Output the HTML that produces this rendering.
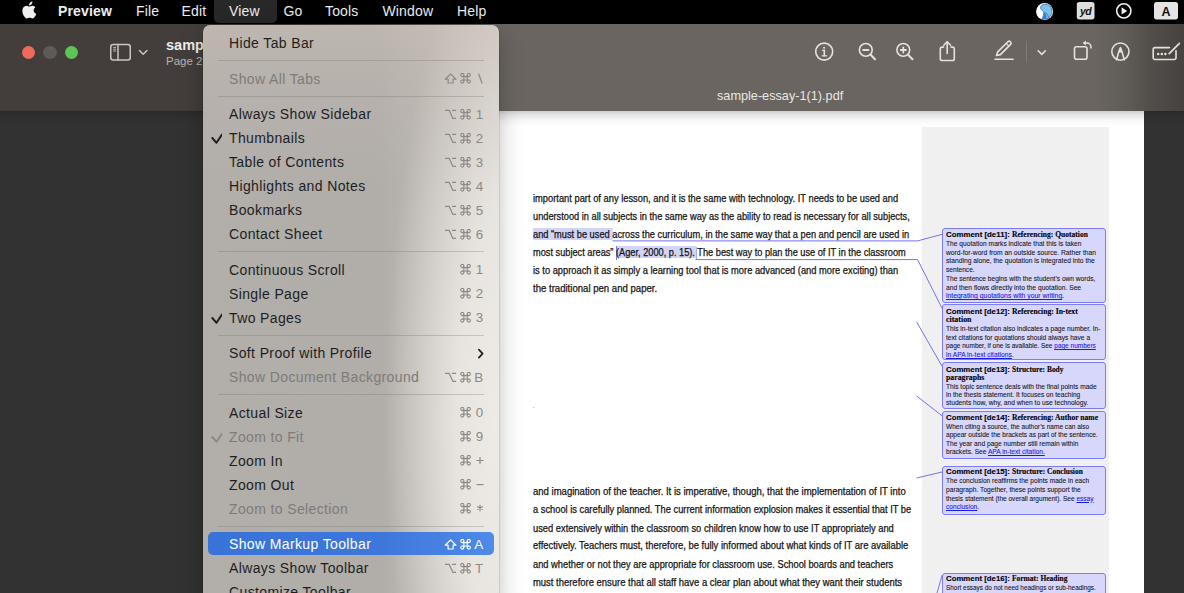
<!DOCTYPE html>
<html><head><meta charset="utf-8">
<style>
*{margin:0;padding:0;box-sizing:border-box}
html,body{width:1184px;height:593px;overflow:hidden;background:#323232;font-family:"Liberation Sans",sans-serif}
.abs{position:absolute}
#menubar{position:absolute;left:0;top:0;width:1184px;height:24px;background:#000}
#menubar .mi{position:absolute;top:-1.2px;height:24px;line-height:24px;color:#ececec;font-size:14px;letter-spacing:0.15px;white-space:nowrap}
#toolbar{z-index:2;position:absolute;left:0;top:24px;width:1184px;height:86.6px;background:linear-gradient(90deg,#433e3b 0px,#433e3b 300px,#6a6560 495px,#6a6560 1095px,#605c57 1125px,#524e4a 1150px,#46423f 1184px)}
#docarea{position:absolute;left:0;top:110px;width:1184px;height:483px;background:#323232}
#page{position:absolute;left:470px;top:110px;width:674px;height:483px;background:#fff}
#topshadow{position:absolute;left:0;top:110px;width:1184px;height:16px;background:linear-gradient(180deg,rgba(0,0,0,0.22),rgba(0,0,0,0.1) 30%,rgba(0,0,0,0.03) 65%,rgba(0,0,0,0))}
#menu{z-index:10;position:absolute;left:203px;top:24.5px;width:296px;height:580px;border-radius:7px;overflow:hidden;box-shadow:0 0 0 0.5px rgba(0,0,0,0.2),0 8px 24px rgba(0,0,0,0.25);
 background:linear-gradient(180deg,rgba(205,194,184,0.45) 0px,rgba(205,194,184,0.2) 60px,rgba(205,194,184,0) 160px),radial-gradient(ellipse 130px 500px at 312px 400px,rgba(241,238,234,0.97) 0%,rgba(238,235,231,0.85) 45%,rgba(232,228,224,0) 100%),linear-gradient(90deg,#b2aeaa 0px,#b1ada9 175px,#bcb7b2 230px,#c8c2bc 296px)}
.it{position:relative;height:24px;font-size:14px;letter-spacing:0.37px;color:#1e1e1e;white-space:nowrap}
.it .t{position:absolute;left:26px;top:0;line-height:24px}
.it .k{position:absolute;right:16px;top:0;line-height:24px;color:#8a8683}
.it.dis .t{color:#7f7b78}
.it .ck{position:absolute;left:5px;top:0}
.it .sc{position:absolute;left:241px;top:6.5px}
.sep{height:11.5px;position:relative}
.sep::after{content:"";position:absolute;left:15px;right:15px;top:5px;height:1px;background:rgba(120,115,110,0.32)}
.it.hl{}
.it.hl::before{content:"";position:absolute;left:5px;right:5px;top:-0.5px;height:23.5px;border-radius:5px;background:linear-gradient(90deg,#3a73d7 0%,#3d77dc 60%,#4f8be8 100%)}
.it.hl .t,.it.hl .k{color:#fff}
.doc{position:absolute;left:533px;font-size:10px;color:#111;white-space:nowrap;line-height:12px}
.doc span.s{display:inline-block;transform-origin:0 50%}

.ln{position:absolute;line-height:0;white-space:nowrap}
.ln .s{display:inline-block;line-height:0;transform-origin:0 0;-webkit-text-stroke:0.25px currentColor}
.ct .s{-webkit-text-stroke:0.12px currentColor}
.cb .s{-webkit-text-stroke:0.08px currentColor}
.doc{}
u{color:#1a1ae6;text-decoration:underline;text-decoration-thickness:0.35px;text-underline-offset:0.8px}
.cbox{position:absolute;left:942.2px;width:163.5px;background:#d7d7fc;border:1px solid #7b7bf2;border-radius:3px}
</style></head><body>
<div id="menubar">
  <div class="mi" style="left:214px;width:62.5px;height:27px;top:-4px;background:#282828;border-radius:5px"></div>
  <svg class="abs" style="left:21px;top:0.8px" width="16" height="18" viewBox="0 0 16 18"><path fill="#efefef" d="M12.6 9.5c0-2 1.7-3 1.8-3.1-1-1.4-2.5-1.6-3-1.7-1.3-.1-2.5.8-3.1.8-.7 0-1.7-.8-2.7-.8C4.100 4.800 2.800 5.600 2.100 6.900.6 9.400 1.700 13.200 3.200 15.300c.7 1 1.600 2.200 2.700 2.100 1.100 0 1.500-.7 2.800-.7s1.700.7 2.800.7c1.200 0 1.900-1 2.600-2.100.8-1.200 1.200-2.300 1.200-2.400-.1 0-2.700-1-2.700-3.400zM10.500 3.300c.6-.7 1-1.700.9-2.700-.9 0-1.900.6-2.500 1.300-.6.600-1.100 1.600-.9 2.600 1 .1 1.900-.5 2.500-1.200z"/></svg>
  <div class="mi" style="left:58px;font-weight:bold">Preview</div>
  <div class="mi" style="left:136px">File</div>
  <div class="mi" style="left:181.5px">Edit</div>
  <div class="mi" style="left:229px">View</div>
  <div class="mi" style="left:283.5px">Go</div>
  <div class="mi" style="left:325px">Tools</div>
  <div class="mi" style="left:382.5px">Window</div>
  <div class="mi" style="left:457px">Help</div>
  <svg class="abs" style="left:1030px;top:0" width="154" height="24" viewBox="1030 0 154 24">
    <circle cx="1044.6" cy="11.4" r="8.5" fill="#fbfbfb"/>
    <path d="M1041.2 5.8C1043 3.6 1048.5 3.8 1050.8 7C1053 10.5 1052.2 16.5 1047.2 18.7C1045.6 19.3 1043.6 19.4 1042.1 19C1043.3 16.6 1044 14 1043.6 12.4C1043.3 11 1041.2 10.2 1040.7 8.6C1040.4 7.5 1040.6 6.6 1041.2 5.8Z" fill="#7cc3ec" stroke="#2d5f9e" stroke-width="0.7"/>
    <path d="M1042.1 19C1043.5 16 1044.2 13.5 1044.3 12.3C1046 13.5 1046.8 16 1046.6 19Z" fill="#3a7ccd"/>
    <path d="M1044.6 12.2C1047 13 1048.4 15.5 1048.6 18.4" fill="none" stroke="#2d5f9e" stroke-width="0.7"/>
    <rect x="1076.8" y="2" width="17.7" height="17.4" rx="2.6" fill="#dedede"/>
    <text x="1085.6" y="15" text-anchor="middle" font-family="Liberation Sans" font-weight="bold" font-style="italic" font-size="10.5" fill="#111" letter-spacing="-0.6">yd</text>
    <circle cx="1123.8" cy="10.9" r="7.1" fill="none" stroke="#f2f2f2" stroke-width="1.6"/>
    <path d="M1121.6 7.3v7.2l5.6-3.6z" fill="#f2f2f2"/>
    <rect x="1154" y="2" width="24" height="17.4" rx="2.6" fill="#e4e4e4"/>
    <text x="1166" y="15.6" text-anchor="middle" font-family="Liberation Sans" font-weight="bold" font-size="12.5" fill="#111">A</text>
  </svg>
</div>

<div id="toolbar"></div>
<div id="tbitems" style="position:absolute;left:0;top:0;z-index:3">
  <div class="abs" style="left:21.5px;top:45.5px;width:13.6px;height:13.6px;border-radius:50%;background:#ec6a5e"></div>
  <div class="abs" style="left:43.1px;top:45.5px;width:13.6px;height:13.6px;border-radius:50%;background:#5e5a57"></div>
  <div class="abs" style="left:64.8px;top:45.5px;width:13.6px;height:13.6px;border-radius:50%;background:#5fc454"></div>
  <svg class="abs" style="left:108px;top:42px" width="44" height="21" viewBox="0 0 44 21">
    <g fill="none" stroke="#cbc6c1" stroke-width="1.5" stroke-linecap="round" stroke-linejoin="round">
      <rect x="2.75" y="2.5" width="19.5" height="15.5" rx="2.5"/>
      <line x1="10" y1="2.5" x2="10" y2="18"/>
      <line x1="5.6" y1="5.4" x2="7.7" y2="5.4" stroke-width="0.9"/>
      <line x1="5.6" y1="7.2" x2="7.7" y2="7.2" stroke-width="0.9"/>
      <line x1="5.6" y1="9" x2="7.7" y2="9" stroke-width="0.9"/>
      <polyline points="31.5,8.5 35.2,12.2 38.9,8.5"/>
    </g>
  </svg>
  <div class="abs" style="left:166px;top:36.5px;font-size:14.5px;font-weight:bold;color:#f0ece8;white-space:nowrap">sample-essay-1(1).pdf</div>
  <div class="abs" style="left:166px;top:54.8px;font-size:11.5px;color:#b9b4af;white-space:nowrap">Page 2 of 3</div>
  <svg class="abs" style="left:800px;top:36px" width="384" height="30" viewBox="800 36 384 30">
    <g fill="none" stroke="#e6e1dc" stroke-width="1.6" stroke-linecap="round" stroke-linejoin="round">
      <circle cx="824.2" cy="51.6" r="8.5"/>
      <line x1="824.3" y1="50.3" x2="824.3" y2="55.6" stroke-width="1.6"/>
      <line x1="822.5" y1="50.3" x2="824.3" y2="50.3" stroke-width="1.2"/>
      <line x1="822.2" y1="55.8" x2="826.6" y2="55.8" stroke-width="1.3"/>
      <circle cx="865.8" cy="49.9" r="6.4"/>
      <line x1="870.6" y1="54.7" x2="875" y2="59.2" stroke-width="2"/>
      <line x1="863.2" y1="50" x2="868.4" y2="50" stroke-width="1.9"/>
      <circle cx="903.3" cy="49.9" r="6.4"/>
      <line x1="908.1" y1="54.7" x2="912.5" y2="59.2" stroke-width="2"/>
      <line x1="900.7" y1="50" x2="905.9" y2="50" stroke-width="1.8"/>
      <line x1="903.3" y1="47.4" x2="903.3" y2="52.6" stroke-width="1.8"/>
      <path d="M943.6 47.1h-1.5a1.8 1.8 0 0 0 -1.8 1.8v9.8a1.8 1.8 0 0 0 1.8 1.8h10.4a1.8 1.8 0 0 0 1.8 -1.8v-9.8a1.8 1.8 0 0 0 -1.8 -1.8h-1.5"/>
      <line x1="947.2" y1="42" x2="947.2" y2="53.5"/>
      <polyline points="943.8,45.2 947.2,41.8 950.6,45.2"/>
      <path d="M996.5 55.5l1.2-3.6 10.2-10.2a1.7 1.7 0 0 1 2.4 0l0.3 0.3a1.7 1.7 0 0 1 0 2.4l-10.2 10.2z"/>
      <line x1="1006.2" y1="43.4" x2="1008.9" y2="46.1" stroke-width="1.2"/>
      <line x1="995" y1="59.2" x2="1013" y2="59.2" stroke-width="1.6"/>
      <polyline points="1038.2,50.8 1041.8,54.4 1045.4,50.8"/>
      <rect x="1074.5" y="46.8" width="12.5" height="12.5" rx="2"/>
      <path d="M1085.2 43h1.6a4.2 4.2 0 0 1 4.2 4.2v0.8"/>
      <circle cx="1120.4" cy="51.6" r="8.6"/>
      <path d="M1116.6 59.8l2-7.4 1.8-4.6 1.8 4.6 2 7.4"/>
      <path d="M1155 47.6a1.8 1.8 0 0 0 -1.8 1.8v8.3a1.8 1.8 0 0 0 1.8 1.8h19.2a1.8 1.8 0 0 0 1.8 -1.8v-7 M1155 47.6h14.5"/>
      <line x1="1169.2" y1="53.6" x2="1178.4" y2="44.4" stroke-width="1.7"/>
    </g>
    <path d="M1082.6 43l3.2-2.4v4.8z" fill="#e6e1dc"/>
    <path d="M1120.4 46.4l-2.4 6h4.8z" fill="#e6e1dc"/>
    <circle cx="824.1" cy="47.8" r="1.05" fill="#e6e1dc"/>
    <line x1="1026.5" y1="41" x2="1026.5" y2="62.5" stroke="#807a75" stroke-width="1"/>
    <g fill="#e6e1dc"><circle cx="1158.2" cy="53.9" r="1.25"/><circle cx="1161.8" cy="53.9" r="1.25"/><circle cx="1165.4" cy="53.9" r="1.25"/><circle cx="1179.3" cy="43.5" r="0.9"/></g>
  </svg>
  <div class="abs" style="left:717px;top:88.6px;font-size:12.7px;color:#ebe7e3;white-space:nowrap">sample-essay-1(1).pdf</div>
</div>
<div id="docarea"></div>
<div id="page"></div>
<div class="abs" style="left:921.5px;top:126.7px;width:187.5px;height:470px;background:#f0f0f0"></div>
<div class="abs" style="left:533px;top:228px;width:79.4px;height:11.6px;background:#d3d3f6"></div>
<div class="abs" style="left:616.4px;top:246.4px;width:79.6px;height:11.9px;background:#d3d3f6"></div>
<div class="abs" style="left:612.4px;top:228px;width:1px;height:12px;background:#e3e3fb"></div>
<div class="abs" style="left:616px;top:246.3px;width:1px;height:13.5px;background:#7a7af0"></div>
<div class="abs" style="left:695.6px;top:246.5px;width:1px;height:13px;background:#a9a9f5"></div>
<svg class="abs" style="left:0;top:0" width="1184" height="593">
 <g fill="none" stroke="#7272f2" stroke-width="1">
  <polyline points="612.4,240.9 917.6,240.9 942.2,234.3"/>
  <polyline points="695.6,259.6 917.6,259.6 942.2,308.5"/>
  <line x1="916.7" y1="322" x2="942" y2="366.2"/>
  <line x1="916.7" y1="396" x2="942" y2="415.8"/>
  <line x1="916.7" y1="478" x2="942" y2="472"/>
  <line x1="937" y1="593" x2="942.2" y2="575"/>
 </g>
</svg>
<div class="cbox" style="top:228.2px;height:74.5px"></div>
<div class="cbox" style="top:304.2px;height:56.2px"></div>
<div class="cbox" style="top:362.3px;height:47.2px"></div>
<div class="cbox" style="top:410.6px;height:48.6px"></div>
<div class="cbox" style="top:465.6px;height:49px"></div>
<div class="cbox" style="top:572.9px;height:40px"></div>
<div class="ln doc" style="left:533.40px;top:198.73px;font-family:'Liberation Sans';font-size:10px;font-weight:normal;color:#141414"><span class="s" id="m0" style="transform:scaleX(0.9327)">important part of any lesson, and it is the same with technology. IT needs to be used and</span></div>
<div class="ln doc" style="left:533.40px;top:216.73px;font-family:'Liberation Sans';font-size:10px;font-weight:normal;color:#141414"><span class="s" id="m1" style="transform:scaleX(0.9233)">understood in all subjects in the same way as the ability to read is necessary for all subjects,</span></div>
<div class="ln doc" style="left:533.40px;top:234.63px;font-family:'Liberation Sans';font-size:10px;font-weight:normal;color:#141414"><span class="s" id="m2" style="transform:scaleX(0.9258)"><span class="hl1">and “must be used </span>across the curriculum, in the same way that a pen and pencil are used in</span></div>
<div class="ln doc" style="left:533.40px;top:252.53px;font-family:'Liberation Sans';font-size:10px;font-weight:normal;color:#141414"><span class="s" id="m3" style="transform:scaleX(0.9218)">most subject areas” <span class="hl2">(Ager, 2000, p. 15).</span> The best way to plan the use of IT in the classroom</span></div>
<div class="ln doc" style="left:533.40px;top:270.54px;font-family:'Liberation Sans';font-size:10px;font-weight:normal;color:#141414"><span class="s" id="m4" style="transform:scaleX(0.9306)">is to approach it as simply a learning tool that is more advanced (and more exciting) than</span></div>
<div class="ln doc" style="left:533.40px;top:288.54px;font-family:'Liberation Sans';font-size:10px;font-weight:normal;color:#141414"><span class="s" id="m5" style="transform:scaleX(0.9580)">the traditional pen and paper.</span></div>
<div class="ln doc" style="left:533.40px;top:492.13px;font-family:'Liberation Sans';font-size:10px;font-weight:normal;color:#141414"><span class="s" id="m6" style="transform:scaleX(0.9528)">and imagination of the teacher. It is imperative, though, that the implementation of IT into</span></div>
<div class="ln doc" style="left:533.40px;top:510.44px;font-family:'Liberation Sans';font-size:10px;font-weight:normal;color:#141414"><span class="s" id="m7" style="transform:scaleX(0.9303)">a school is carefully planned. The current information explosion makes it essential that IT be</span></div>
<div class="ln doc" style="left:533.40px;top:528.53px;font-family:'Liberation Sans';font-size:10px;font-weight:normal;color:#141414"><span class="s" id="m8" style="transform:scaleX(0.9317)">used extensively within the classroom so children know how to use IT appropriately and</span></div>
<div class="ln doc" style="left:533.40px;top:546.34px;font-family:'Liberation Sans';font-size:10px;font-weight:normal;color:#141414"><span class="s" id="m9" style="transform:scaleX(0.9419)">effectively. Teachers must, therefore, be fully informed about what kinds of IT are available</span></div>
<div class="ln doc" style="left:533.40px;top:564.63px;font-family:'Liberation Sans';font-size:10px;font-weight:normal;color:#141414"><span class="s" id="m10" style="transform:scaleX(0.9297)">and whether or not they are appropriate for classroom use. School boards and teachers</span></div>
<div class="ln doc" style="left:533.40px;top:582.63px;font-family:'Liberation Sans';font-size:10px;font-weight:normal;color:#141414"><span class="s" id="m11" style="transform:scaleX(0.9447)">must therefore ensure that all staff have a clear plan about what they want their students</span></div>
<div class="ln ct" style="left:946.40px;top:234.51px;font-family:'Liberation Sans';font-size:7.2px;font-weight:bold;color:#000"><span class="s" id="m12" style="transform:scaleX(1.0941)">Comment [de11]:</span></div>
<div class="ln ct" style="left:1012.00px;top:234.50px;font-family:'Liberation Serif';font-size:7.4px;font-weight:bold;color:#000"><span class="s" id="m13" style="transform:scaleX(1.0203)">Referencing: Quotation</span></div>
<div class="ln cb" style="left:946.40px;top:244.11px;font-family:'Liberation Sans';font-size:6.6px;font-weight:normal;color:#161616"><span class="s" id="m14" style="transform:scaleX(1.0100)">The quotation marks indicate that this is taken</span></div>
<div class="ln cb" style="left:946.40px;top:252.71px;font-family:'Liberation Sans';font-size:6.6px;font-weight:normal;color:#161616"><span class="s" id="m15" style="transform:scaleX(1.0156)">word-for-word from an outside source. Rather than</span></div>
<div class="ln cb" style="left:946.40px;top:261.21px;font-family:'Liberation Sans';font-size:6.6px;font-weight:normal;color:#161616"><span class="s" id="m16" style="transform:scaleX(1.0198)">standing alone, the quotation is integrated into the</span></div>
<div class="ln cb" style="left:946.40px;top:269.91px;font-family:'Liberation Sans';font-size:6.6px;font-weight:normal;color:#161616"><span class="s" id="m17" style="transform:scaleX(1.0037)">sentence.</span></div>
<div class="ln cb" style="left:946.40px;top:279.31px;font-family:'Liberation Sans';font-size:6.6px;font-weight:normal;color:#161616"><span class="s" id="m18" style="transform:scaleX(1.0016)">The sentence begins with the student’s own words,</span></div>
<div class="ln cb" style="left:946.40px;top:287.81px;font-family:'Liberation Sans';font-size:6.6px;font-weight:normal;color:#161616"><span class="s" id="m19" style="transform:scaleX(1.0153)">and then flows directly into the quotation. See</span></div>
<div class="ln cb" style="left:946.40px;top:296.41px;font-family:'Liberation Sans';font-size:6.6px;font-weight:normal;color:#161616"><span class="s" id="m20" style="transform:scaleX(1.0360)"><u>integrating quotations with your writing</u>.</span></div>
<div class="ln ct" style="left:946.40px;top:312.11px;font-family:'Liberation Sans';font-size:7.2px;font-weight:bold;color:#000"><span class="s" id="m21" style="transform:scaleX(1.0865)">Comment [de12]:</span></div>
<div class="ln ct" style="left:1012.00px;top:312.10px;font-family:'Liberation Serif';font-size:7.4px;font-weight:bold;color:#000"><span class="s" id="m22" style="transform:scaleX(1.0313)">Referencing: In-text</span></div>
<div class="ln ct" style="left:946.40px;top:320.20px;font-family:'Liberation Serif';font-size:7.4px;font-weight:bold;color:#000"><span class="s" id="m23" style="transform:scaleX(1.0709)">citation</span></div>
<div class="ln cb" style="left:946.40px;top:329.31px;font-family:'Liberation Sans';font-size:6.6px;font-weight:normal;color:#161616"><span class="s" id="m24" style="transform:scaleX(1.0037)">This in-text citation also indicates a page number. In-</span></div>
<div class="ln cb" style="left:946.40px;top:337.71px;font-family:'Liberation Sans';font-size:6.6px;font-weight:normal;color:#161616"><span class="s" id="m25" style="transform:scaleX(1.0054)">text citations for quotations should always have a</span></div>
<div class="ln cb" style="left:946.40px;top:346.21px;font-family:'Liberation Sans';font-size:6.6px;font-weight:normal;color:#161616"><span class="s" id="m26" style="transform:scaleX(0.9847)">page number, if one is available. See <u>page numbers</u></span></div>
<div class="ln cb" style="left:946.40px;top:355.11px;font-family:'Liberation Sans';font-size:6.6px;font-weight:normal;color:#161616"><span class="s" id="m27" style="transform:scaleX(1.0166)"><u>in APA in-text citations</u>.</span></div>
<div class="ln ct" style="left:946.40px;top:369.61px;font-family:'Liberation Sans';font-size:7.2px;font-weight:bold;color:#000"><span class="s" id="m28" style="transform:scaleX(1.0865)">Comment [de13]:</span></div>
<div class="ln ct" style="left:1012.00px;top:369.60px;font-family:'Liberation Serif';font-size:7.4px;font-weight:bold;color:#000"><span class="s" id="m29" style="transform:scaleX(1.0101)">Structure: Body</span></div>
<div class="ln ct" style="left:946.40px;top:378.10px;font-family:'Liberation Serif';font-size:7.4px;font-weight:bold;color:#000"><span class="s" id="m30" style="transform:scaleX(1.0503)">paragraphs</span></div>
<div class="ln cb" style="left:946.40px;top:386.51px;font-family:'Liberation Sans';font-size:6.6px;font-weight:normal;color:#161616"><span class="s" id="m31" style="transform:scaleX(1.0003)">This topic sentence deals with the final points made</span></div>
<div class="ln cb" style="left:946.40px;top:394.81px;font-family:'Liberation Sans';font-size:6.6px;font-weight:normal;color:#161616"><span class="s" id="m32" style="transform:scaleX(1.0038)">in the thesis statement. It focuses on teaching</span></div>
<div class="ln cb" style="left:946.40px;top:403.41px;font-family:'Liberation Sans';font-size:6.6px;font-weight:normal;color:#161616"><span class="s" id="m33" style="transform:scaleX(1.0120)">students how, why, and when to use technology.</span></div>
<div class="ln ct" style="left:946.40px;top:417.61px;font-family:'Liberation Sans';font-size:7.2px;font-weight:bold;color:#000"><span class="s" id="m34" style="transform:scaleX(1.0865)">Comment [de14]:</span></div>
<div class="ln ct" style="left:1012.00px;top:417.60px;font-family:'Liberation Serif';font-size:7.4px;font-weight:bold;color:#000"><span class="s" id="m35" style="transform:scaleX(1.0251)">Referencing: Author name</span></div>
<div class="ln cb" style="left:946.40px;top:426.51px;font-family:'Liberation Sans';font-size:6.6px;font-weight:normal;color:#161616"><span class="s" id="m36" style="transform:scaleX(0.9907)">When citing a source, the author’s name can also</span></div>
<div class="ln cb" style="left:946.40px;top:435.01px;font-family:'Liberation Sans';font-size:6.6px;font-weight:normal;color:#161616"><span class="s" id="m37" style="transform:scaleX(0.9972)">appear outside the brackets as part of the sentence.</span></div>
<div class="ln cb" style="left:946.40px;top:443.51px;font-family:'Liberation Sans';font-size:6.6px;font-weight:normal;color:#161616"><span class="s" id="m38" style="transform:scaleX(1.0062)">The year and page number still remain within</span></div>
<div class="ln cb" style="left:946.40px;top:452.41px;font-family:'Liberation Sans';font-size:6.6px;font-weight:normal;color:#161616"><span class="s" id="m39" style="transform:scaleX(1.0032)">brackets. See <u>APA in-text citation.</u></span></div>
<div class="ln ct" style="left:946.40px;top:472.41px;font-family:'Liberation Sans';font-size:7.2px;font-weight:bold;color:#000"><span class="s" id="m40" style="transform:scaleX(1.0865)">Comment [de15]:</span></div>
<div class="ln ct" style="left:1012.00px;top:472.40px;font-family:'Liberation Serif';font-size:7.4px;font-weight:bold;color:#000"><span class="s" id="m41" style="transform:scaleX(1.0132)">Structure: Conclusion</span></div>
<div class="ln cb" style="left:946.40px;top:481.21px;font-family:'Liberation Sans';font-size:6.6px;font-weight:normal;color:#161616"><span class="s" id="m42" style="transform:scaleX(0.9975)">The conclusion reaffirms the points made in each</span></div>
<div class="ln cb" style="left:946.40px;top:489.51px;font-family:'Liberation Sans';font-size:6.6px;font-weight:normal;color:#161616"><span class="s" id="m43" style="transform:scaleX(1.0131)">paragraph. Together, these points support the</span></div>
<div class="ln cb" style="left:946.40px;top:498.61px;font-family:'Liberation Sans';font-size:6.6px;font-weight:normal;color:#161616"><span class="s" id="m44" style="transform:scaleX(0.9912)">thesis statement (the overall argument). See <u>essay</u></span></div>
<div class="ln cb" style="left:946.40px;top:507.11px;font-family:'Liberation Sans';font-size:6.6px;font-weight:normal;color:#161616"><span class="s" id="m45" style="transform:scaleX(1.0030)"><u>conclusion</u>.</span></div>
<div class="ln ct" style="left:946.40px;top:579.11px;font-family:'Liberation Sans';font-size:7.2px;font-weight:bold;color:#000"><span class="s" id="m46" style="transform:scaleX(1.0865)">Comment [de16]:</span></div>
<div class="ln ct" style="left:1011.50px;top:579.10px;font-family:'Liberation Serif';font-size:7.4px;font-weight:bold;color:#000"><span class="s" id="m47" style="transform:scaleX(1.0107)">Format: Heading</span></div>
<div class="ln cb" style="left:946.40px;top:587.71px;font-family:'Liberation Sans';font-size:6.6px;font-weight:normal;color:#161616"><span class="s" id="m48" style="transform:scaleX(0.9707)">Short essays do not need headings or sub-headings.</span></div>
<div class="abs" style="left:533px;top:406.5px;width:1px;height:1px;background:#bbb"></div>

<div id="topshadow"></div>

<div id="menu">
<div style="height:6.6px"></div>
<div class="it"><span class="t">Hide Tab Bar</span></div>
<div class="sep"></div>
<div class="it dis"><span class="t">Show All Tabs</span><svg class="sc" width="42" height="12" viewBox="0 0 42 12"><path d="M6.6 0.9L12 6.2H9.1V10H4.1V6.2H1.2Z" fill="none" stroke="#8d8985" stroke-width="1.2" stroke-linejoin="round"/><g fill="none" stroke="#8d8985" stroke-width="1.05"><path d="M19.900000000000002 2.0V8.5M23.200000000000003 2.0V8.5M18.3 3.6H24.800000000000004M18.3 6.9H24.800000000000004"/><circle cx="18.30" cy="2.00" r="1.6"/><circle cx="18.30" cy="8.50" r="1.6"/><circle cx="24.80" cy="2.00" r="1.6"/><circle cx="24.80" cy="8.50" r="1.6"/></g><path d="M34.6 0.6L38.2 10.6" stroke="#8d8985" stroke-width="1.3" fill="none"/></svg></div>
<div class="sep"></div>
<div class="it"><span class="t">Always Show Sidebar</span><svg class="sc" width="42" height="12" viewBox="0 0 42 12"><path d="M1 1.3H5.1L8.9 9.4H12.1M8 1.3H12.1" fill="none" stroke="#8d8985" stroke-width="1.25"/><g fill="none" stroke="#8d8985" stroke-width="1.05"><path d="M19.900000000000002 2.0V8.5M23.200000000000003 2.0V8.5M18.3 3.6H24.800000000000004M18.3 6.9H24.800000000000004"/><circle cx="18.30" cy="2.00" r="1.6"/><circle cx="18.30" cy="8.50" r="1.6"/><circle cx="24.80" cy="2.00" r="1.6"/><circle cx="24.80" cy="8.50" r="1.6"/></g><text x="39.6" y="10.2" text-anchor="end" font-family="Liberation Sans" font-size="13.4" fill="#8d8985">1</text></svg></div>
<div class="it"><svg class="ck" width="14" height="24" viewBox="0 0 14 24"><polyline points="5.9,12 10.1,16.8 15.7,8.4" fill="none" stroke="currentColor" stroke-width="1.9" stroke-linecap="round" stroke-linejoin="round" transform="translate(-1.6,0)"/></svg><span class="t">Thumbnails</span><svg class="sc" width="42" height="12" viewBox="0 0 42 12"><path d="M1 1.3H5.1L8.9 9.4H12.1M8 1.3H12.1" fill="none" stroke="#8d8985" stroke-width="1.25"/><g fill="none" stroke="#8d8985" stroke-width="1.05"><path d="M19.900000000000002 2.0V8.5M23.200000000000003 2.0V8.5M18.3 3.6H24.800000000000004M18.3 6.9H24.800000000000004"/><circle cx="18.30" cy="2.00" r="1.6"/><circle cx="18.30" cy="8.50" r="1.6"/><circle cx="24.80" cy="2.00" r="1.6"/><circle cx="24.80" cy="8.50" r="1.6"/></g><text x="39.6" y="10.2" text-anchor="end" font-family="Liberation Sans" font-size="13.4" fill="#8d8985">2</text></svg></div>
<div class="it"><span class="t">Table of Contents</span><svg class="sc" width="42" height="12" viewBox="0 0 42 12"><path d="M1 1.3H5.1L8.9 9.4H12.1M8 1.3H12.1" fill="none" stroke="#8d8985" stroke-width="1.25"/><g fill="none" stroke="#8d8985" stroke-width="1.05"><path d="M19.900000000000002 2.0V8.5M23.200000000000003 2.0V8.5M18.3 3.6H24.800000000000004M18.3 6.9H24.800000000000004"/><circle cx="18.30" cy="2.00" r="1.6"/><circle cx="18.30" cy="8.50" r="1.6"/><circle cx="24.80" cy="2.00" r="1.6"/><circle cx="24.80" cy="8.50" r="1.6"/></g><text x="39.6" y="10.2" text-anchor="end" font-family="Liberation Sans" font-size="13.4" fill="#8d8985">3</text></svg></div>
<div class="it"><span class="t">Highlights and Notes</span><svg class="sc" width="42" height="12" viewBox="0 0 42 12"><path d="M1 1.3H5.1L8.9 9.4H12.1M8 1.3H12.1" fill="none" stroke="#8d8985" stroke-width="1.25"/><g fill="none" stroke="#8d8985" stroke-width="1.05"><path d="M19.900000000000002 2.0V8.5M23.200000000000003 2.0V8.5M18.3 3.6H24.800000000000004M18.3 6.9H24.800000000000004"/><circle cx="18.30" cy="2.00" r="1.6"/><circle cx="18.30" cy="8.50" r="1.6"/><circle cx="24.80" cy="2.00" r="1.6"/><circle cx="24.80" cy="8.50" r="1.6"/></g><text x="39.6" y="10.2" text-anchor="end" font-family="Liberation Sans" font-size="13.4" fill="#8d8985">4</text></svg></div>
<div class="it"><span class="t">Bookmarks</span><svg class="sc" width="42" height="12" viewBox="0 0 42 12"><path d="M1 1.3H5.1L8.9 9.4H12.1M8 1.3H12.1" fill="none" stroke="#8d8985" stroke-width="1.25"/><g fill="none" stroke="#8d8985" stroke-width="1.05"><path d="M19.900000000000002 2.0V8.5M23.200000000000003 2.0V8.5M18.3 3.6H24.800000000000004M18.3 6.9H24.800000000000004"/><circle cx="18.30" cy="2.00" r="1.6"/><circle cx="18.30" cy="8.50" r="1.6"/><circle cx="24.80" cy="2.00" r="1.6"/><circle cx="24.80" cy="8.50" r="1.6"/></g><text x="39.6" y="10.2" text-anchor="end" font-family="Liberation Sans" font-size="13.4" fill="#8d8985">5</text></svg></div>
<div class="it"><span class="t">Contact Sheet</span><svg class="sc" width="42" height="12" viewBox="0 0 42 12"><path d="M1 1.3H5.1L8.9 9.4H12.1M8 1.3H12.1" fill="none" stroke="#8d8985" stroke-width="1.25"/><g fill="none" stroke="#8d8985" stroke-width="1.05"><path d="M19.900000000000002 2.0V8.5M23.200000000000003 2.0V8.5M18.3 3.6H24.800000000000004M18.3 6.9H24.800000000000004"/><circle cx="18.30" cy="2.00" r="1.6"/><circle cx="18.30" cy="8.50" r="1.6"/><circle cx="24.80" cy="2.00" r="1.6"/><circle cx="24.80" cy="8.50" r="1.6"/></g><text x="39.6" y="10.2" text-anchor="end" font-family="Liberation Sans" font-size="13.4" fill="#8d8985">6</text></svg></div>
<div class="sep"></div>
<div class="it"><span class="t">Continuous Scroll</span><svg class="sc" width="42" height="12" viewBox="0 0 42 12"><g fill="none" stroke="#8d8985" stroke-width="1.05"><path d="M19.900000000000002 2.0V8.5M23.200000000000003 2.0V8.5M18.3 3.6H24.800000000000004M18.3 6.9H24.800000000000004"/><circle cx="18.30" cy="2.00" r="1.6"/><circle cx="18.30" cy="8.50" r="1.6"/><circle cx="24.80" cy="2.00" r="1.6"/><circle cx="24.80" cy="8.50" r="1.6"/></g><text x="39.6" y="10.2" text-anchor="end" font-family="Liberation Sans" font-size="13.4" fill="#8d8985">1</text></svg></div>
<div class="it"><span class="t">Single Page</span><svg class="sc" width="42" height="12" viewBox="0 0 42 12"><g fill="none" stroke="#8d8985" stroke-width="1.05"><path d="M19.900000000000002 2.0V8.5M23.200000000000003 2.0V8.5M18.3 3.6H24.800000000000004M18.3 6.9H24.800000000000004"/><circle cx="18.30" cy="2.00" r="1.6"/><circle cx="18.30" cy="8.50" r="1.6"/><circle cx="24.80" cy="2.00" r="1.6"/><circle cx="24.80" cy="8.50" r="1.6"/></g><text x="39.6" y="10.2" text-anchor="end" font-family="Liberation Sans" font-size="13.4" fill="#8d8985">2</text></svg></div>
<div class="it"><svg class="ck" width="14" height="24" viewBox="0 0 14 24"><polyline points="5.9,12 10.1,16.8 15.7,8.4" fill="none" stroke="currentColor" stroke-width="1.9" stroke-linecap="round" stroke-linejoin="round" transform="translate(-1.6,0)"/></svg><span class="t">Two Pages</span><svg class="sc" width="42" height="12" viewBox="0 0 42 12"><g fill="none" stroke="#8d8985" stroke-width="1.05"><path d="M19.900000000000002 2.0V8.5M23.200000000000003 2.0V8.5M18.3 3.6H24.800000000000004M18.3 6.9H24.800000000000004"/><circle cx="18.30" cy="2.00" r="1.6"/><circle cx="18.30" cy="8.50" r="1.6"/><circle cx="24.80" cy="2.00" r="1.6"/><circle cx="24.80" cy="8.50" r="1.6"/></g><text x="39.6" y="10.2" text-anchor="end" font-family="Liberation Sans" font-size="13.4" fill="#8d8985">3</text></svg></div>
<div class="sep"></div>
<div class="it"><span class="t">Soft Proof with Profile</span><svg class="sc" width="42" height="12" viewBox="0 0 42 12"><polyline points="34.9,1.6 38.6,5.6 34.9,9.6" fill="none" stroke="#1e1e1e" stroke-width="1.7" stroke-linecap="round" stroke-linejoin="round"/></svg></div>
<div class="it dis"><span class="t">Show Document Background</span><svg class="sc" width="42" height="12" viewBox="0 0 42 12"><path d="M1 1.3H5.1L8.9 9.4H12.1M8 1.3H12.1" fill="none" stroke="#8d8985" stroke-width="1.25"/><g fill="none" stroke="#8d8985" stroke-width="1.05"><path d="M19.900000000000002 2.0V8.5M23.200000000000003 2.0V8.5M18.3 3.6H24.800000000000004M18.3 6.9H24.800000000000004"/><circle cx="18.30" cy="2.00" r="1.6"/><circle cx="18.30" cy="8.50" r="1.6"/><circle cx="24.80" cy="2.00" r="1.6"/><circle cx="24.80" cy="8.50" r="1.6"/></g><text x="39.6" y="10.2" text-anchor="end" font-family="Liberation Sans" font-size="13.4" fill="#8d8985">B</text></svg></div>
<div class="sep"></div>
<div class="it"><span class="t">Actual Size</span><svg class="sc" width="42" height="12" viewBox="0 0 42 12"><g fill="none" stroke="#8d8985" stroke-width="1.05"><path d="M19.900000000000002 2.0V8.5M23.200000000000003 2.0V8.5M18.3 3.6H24.800000000000004M18.3 6.9H24.800000000000004"/><circle cx="18.30" cy="2.00" r="1.6"/><circle cx="18.30" cy="8.50" r="1.6"/><circle cx="24.80" cy="2.00" r="1.6"/><circle cx="24.80" cy="8.50" r="1.6"/></g><text x="39.6" y="10.2" text-anchor="end" font-family="Liberation Sans" font-size="13.4" fill="#8d8985">0</text></svg></div>
<div class="it dis"><svg class="ck" style="color:#8d8985" width="14" height="24" viewBox="0 0 14 24"><polyline points="5.9,12 10.1,16.8 15.7,8.4" fill="none" stroke="currentColor" stroke-width="1.9" stroke-linecap="round" stroke-linejoin="round" transform="translate(-1.6,0)"/></svg><span class="t">Zoom to Fit</span><svg class="sc" width="42" height="12" viewBox="0 0 42 12"><g fill="none" stroke="#8d8985" stroke-width="1.05"><path d="M19.900000000000002 2.0V8.5M23.200000000000003 2.0V8.5M18.3 3.6H24.800000000000004M18.3 6.9H24.800000000000004"/><circle cx="18.30" cy="2.00" r="1.6"/><circle cx="18.30" cy="8.50" r="1.6"/><circle cx="24.80" cy="2.00" r="1.6"/><circle cx="24.80" cy="8.50" r="1.6"/></g><text x="39.6" y="10.2" text-anchor="end" font-family="Liberation Sans" font-size="13.4" fill="#8d8985">9</text></svg></div>
<div class="it"><span class="t">Zoom In</span><svg class="sc" width="42" height="12" viewBox="0 0 42 12"><g fill="none" stroke="#8d8985" stroke-width="1.05"><path d="M19.900000000000002 2.0V8.5M23.200000000000003 2.0V8.5M18.3 3.6H24.800000000000004M18.3 6.9H24.800000000000004"/><circle cx="18.30" cy="2.00" r="1.6"/><circle cx="18.30" cy="8.50" r="1.6"/><circle cx="24.80" cy="2.00" r="1.6"/><circle cx="24.80" cy="8.50" r="1.6"/></g><path d="M32.4 5.5H39.6M36 1.9V9.1" stroke="#8d8985" stroke-width="1.15" fill="none"/></svg></div>
<div class="it"><span class="t">Zoom Out</span><svg class="sc" width="42" height="12" viewBox="0 0 42 12"><g fill="none" stroke="#8d8985" stroke-width="1.05"><path d="M19.900000000000002 2.0V8.5M23.200000000000003 2.0V8.5M18.3 3.6H24.800000000000004M18.3 6.9H24.800000000000004"/><circle cx="18.30" cy="2.00" r="1.6"/><circle cx="18.30" cy="8.50" r="1.6"/><circle cx="24.80" cy="2.00" r="1.6"/><circle cx="24.80" cy="8.50" r="1.6"/></g><line x1="32.6" y1="5.6" x2="39.6" y2="5.6" stroke="#8d8985" stroke-width="1.15"/></svg></div>
<div class="it dis"><span class="t">Zoom to Selection</span><svg class="sc" width="42" height="12" viewBox="0 0 42 12"><g fill="none" stroke="#8d8985" stroke-width="1.05"><path d="M19.900000000000002 2.0V8.5M23.200000000000003 2.0V8.5M18.3 3.6H24.800000000000004M18.3 6.9H24.800000000000004"/><circle cx="18.30" cy="2.00" r="1.6"/><circle cx="18.30" cy="8.50" r="1.6"/><circle cx="24.80" cy="2.00" r="1.6"/><circle cx="24.80" cy="8.50" r="1.6"/></g><path d="M36 1.8V8.2M33.2 3.4L38.8 6.6M33.2 6.6L38.8 3.4" stroke="#8d8985" stroke-width="1.1" fill="none"/></svg></div>
<div class="sep"></div>
<div class="it hl"><span class="t">Show Markup Toolbar</span><svg class="sc" width="42" height="12" viewBox="0 0 42 12"><path d="M6.6 0.9L12 6.2H9.1V10H4.1V6.2H1.2Z" fill="none" stroke="#ffffff" stroke-width="1.2" stroke-linejoin="round"/><g fill="none" stroke="#ffffff" stroke-width="1.05"><path d="M19.900000000000002 2.0V8.5M23.200000000000003 2.0V8.5M18.3 3.6H24.800000000000004M18.3 6.9H24.800000000000004"/><circle cx="18.30" cy="2.00" r="1.6"/><circle cx="18.30" cy="8.50" r="1.6"/><circle cx="24.80" cy="2.00" r="1.6"/><circle cx="24.80" cy="8.50" r="1.6"/></g><text x="39.6" y="10.2" text-anchor="end" font-family="Liberation Sans" font-size="13.4" fill="#ffffff">A</text></svg></div>
<div class="it"><span class="t">Always Show Toolbar</span><svg class="sc" width="42" height="12" viewBox="0 0 42 12"><path d="M1 1.3H5.1L8.9 9.4H12.1M8 1.3H12.1" fill="none" stroke="#8d8985" stroke-width="1.25"/><g fill="none" stroke="#8d8985" stroke-width="1.05"><path d="M19.900000000000002 2.0V8.5M23.200000000000003 2.0V8.5M18.3 3.6H24.800000000000004M18.3 6.9H24.800000000000004"/><circle cx="18.30" cy="2.00" r="1.6"/><circle cx="18.30" cy="8.50" r="1.6"/><circle cx="24.80" cy="2.00" r="1.6"/><circle cx="24.80" cy="8.50" r="1.6"/></g><text x="39.6" y="10.2" text-anchor="end" font-family="Liberation Sans" font-size="13.4" fill="#8d8985">T</text></svg></div>
<div class="it"><span class="t">Customize Toolbar…</span></div>
</div>
</body></html>
